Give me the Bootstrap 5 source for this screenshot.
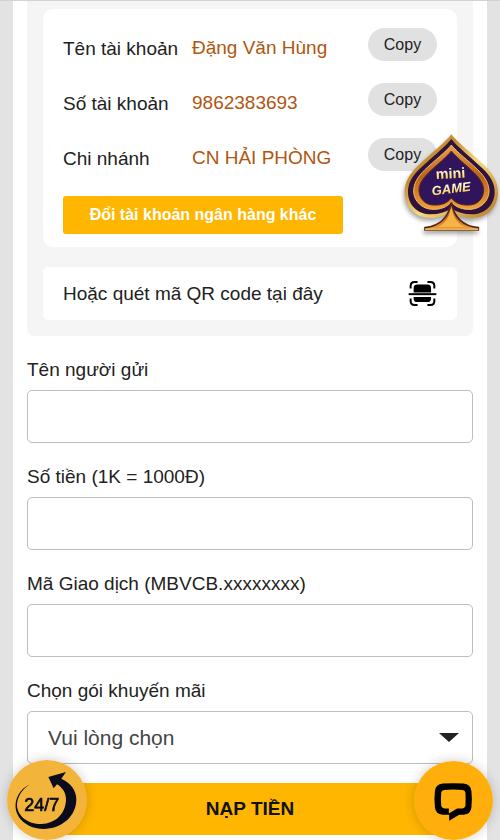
<!DOCTYPE html>
<html lang="vi">
<head>
<meta charset="utf-8">
<meta name="viewport" content="width=device-width, initial-scale=1">
<title>Nạp tiền</title>
<link href="https://cdn.jsdelivr.net/npm/bootstrap@5.3.0/dist/css/bootstrap.min.css" rel="stylesheet">
<style>
body { background: #e3e3e3; border-top: 1px solid #d3d3d3; color: #222; font-family: "Liberation Sans", Arial, sans-serif; font-size: 19px; line-height: 24px; }
.page { margin: 0 13px; padding: 0 14px 5px; }
.bank-panel { background: #f5f5f5; border-radius: 0 0 8px 8px; padding: 8px 16px 16px; margin-bottom: 22px; }
.bank-card { border-radius: 10px; padding: 19px 20px 13px; margin-bottom: 20px; }
.bank-row { margin-bottom: 22px; }
.bank-row:last-of-type { margin-bottom: 25px; }
.bank-label { width: 129px; padding-top: 9px; }
.bank-value { color: #b0560f; padding-top: 8px; }
.btn-copy { width: 69px; height: 33px; padding: 0; border: 0; background: #e1e1e1; color: #222; font-size: 16px; }
.btn-switch { width: 280px; max-width: 100%; height: 38px; padding: 0; border: 0; border-radius: 3px; background: #ffb600; color: #fff; font-size: 16px; font-weight: 700; }
.qr-card { border-radius: 5px; padding: 13px 20px 16px; padding-bottom: 13px; }
.field { margin-bottom: 22px; }
.field:last-of-type { margin-bottom: 19px; }
.field label { display: block; margin-bottom: 8px; }
.field .form-control, .field .form-select { height: 53px; border: 1px solid #bdbdbd; border-radius: 5px; font-size: 19px; }
.field .form-select { padding-left: 20px; color: #444; font-size: 21px; background-image: url("data:image/svg+xml,%3Csvg xmlns='http://www.w3.org/2000/svg' viewBox='0 0 20 9'%3E%3Cpath d='M0 0h20L10 9z' fill='%23222'/%3E%3C/svg%3E"); background-size: 20px 9px; background-position: right 13px center; }
.btn-submit { height: 52px; border: 0; border-radius: 3px; background: #ffb600; color: #111; font-size: 19px; font-weight: 700; }
.float-btn { position: fixed; z-index: 10; display: block; padding: 0; border: 0; background: none; }
.float-btn svg { display: block; }
.float-round { bottom: 0; border-radius: 50%; box-shadow: 0 0 12px rgba(0, 0, 0, .2); }
.float-hotline { left: 7px; }
.float-chat { right: 7px; }
.float-game { top: 133px; right: 0; filter: drop-shadow(-1px 3px 2px rgba(0, 0, 0, .35)); }
</style>
</head>
<body>
<main class="page bg-white">
  <section class="bank-panel">
    <div class="bank-card bg-white">
      <div class="bank-row d-flex align-items-start">
        <div class="bank-label">Tên tài khoản</div>
        <div class="bank-value flex-grow-1">Đặng Văn Hùng</div>
        <button type="button" class="btn btn-copy rounded-pill">Copy</button>
      </div>
      <div class="bank-row d-flex align-items-start">
        <div class="bank-label">Số tài khoản</div>
        <div class="bank-value flex-grow-1">9862383693</div>
        <button type="button" class="btn btn-copy rounded-pill">Copy</button>
      </div>
      <div class="bank-row d-flex align-items-start">
        <div class="bank-label">Chi nhánh</div>
        <div class="bank-value flex-grow-1">CN HẢI PHÒNG</div>
        <button type="button" class="btn btn-copy rounded-pill">Copy</button>
      </div>
      <button type="button" class="btn btn-switch d-block">Đổi tài khoản ngân hàng khác</button>
    </div>
    <div class="qr-card bg-white d-flex align-items-center justify-content-between">
      <span>Hoặc quét mã QR code tại đây</span>
      <button type="button" class="btn p-0 border-0 lh-1" aria-label="Quét mã QR">
        <svg class="d-block" width="29" height="27" viewBox="56 46 86 82" fill="none" stroke="#000" stroke-width="6">
          <path d="M63 72v-8q0-12 12-12h9M114 52h9q12 0 12 12v8M63 102v8q0 12 12 12h9M114 122h9q12 0 12-12v-8"/>
          <path d="M57 89h84"/>
          <path d="M72 84V71q0-11 11-11h31q11 0 11 11v13zM72 98h53v4q0 11-11 11H83q-11 0-11-11z" fill="#000" stroke="none"/>
        </svg>
      </button>
    </div>
  </section>

  <form>
    <div class="field">
      <label for="sender">Tên người gửi</label>
      <input type="text" id="sender" class="form-control">
    </div>
    <div class="field">
      <label for="amount">Số tiền (1K = 1000Đ)</label>
      <input type="text" id="amount" class="form-control">
    </div>
    <div class="field">
      <label for="code">Mã Giao dịch (MBVCB.xxxxxxxx)</label>
      <input type="text" id="code" class="form-control">
    </div>
    <div class="field">
      <label for="promo">Chọn gói khuyến mãi</label>
      <select id="promo" class="form-select"><option>Vui lòng chọn</option></select>
    </div>
    <button type="button" class="btn btn-submit d-block w-100">NẠP TIỀN</button>
  </form>
</main>

<button type="button" class="float-btn float-game" aria-label="Mini game">
  <svg width="96" height="98" viewBox="28 24 288 294">
    <defs>
      <linearGradient id="gold" x1="0" y1="0" x2="1" y2="1">
        <stop offset="0" stop-color="#e8c75a"/><stop offset=".3" stop-color="#c38a2e"/><stop offset=".55" stop-color="#f5dc7c"/><stop offset="1" stop-color="#b97422"/>
      </linearGradient>
      <linearGradient id="copper" x1="0" y1="0" x2="0" y2="1">
        <stop offset="0" stop-color="#e9a24a"/><stop offset=".5" stop-color="#b9621c"/><stop offset="1" stop-color="#f0a23b"/>
      </linearGradient>
      <linearGradient id="shine" x1="0" y1="0" x2="0" y2="1">
        <stop offset=".35" stop-color="#fff6c8"/><stop offset="1" stop-color="#f9c832"/>
      </linearGradient>
    </defs>
    <path d="M170 28C186 50 232 86 270 122C298 149 311 174 310 205C308 249 276 279 232 279C207 279 187 272 170 258C153 272 133 279 108 279C64 279 32 249 30 205C29 174 42 149 70 122C108 86 154 50 170 28Z" fill="url(#gold)"/>
    <path d="M170 42C186 64 226 94 263 130C289 155 301 177 300 204C298 243 269 268 232 268C207 268 187 262 170 250C153 262 133 268 108 268C71 268 42 243 40 204C39 177 51 155 77 130C114 94 154 64 170 42Z" fill="#30123e"/>
    <path d="M170 60C185 80 220 106 249 134C272 156 284 178 283 201C281 230 257 251 229 253C203 254 184 247 170 231C156 247 137 254 111 253C83 251 59 230 57 201C56 178 68 156 91 134C120 106 155 80 170 60Z" fill="url(#copper)" stroke="#efbd64" stroke-width="3"/>
    <path d="M170 78C185 97 213 119 238 143C259 164 268 181 267 198C265 222 249 238 226 240C199 242 182 234 170 219C158 234 141 242 114 240C91 238 75 222 73 198C72 181 81 164 102 143C127 119 155 97 170 78Z" fill="#30155d" stroke="#5d2518" stroke-width="3"/>
    <path d="M170 232C177 272 202 303 251 308V315H91V308C138 303 163 272 170 232Z" fill="url(#copper)" stroke="#54231a" stroke-width="5"/>
    <path d="M170 246C176 278 191 298 211 306H129C149 298 164 278 170 246Z" fill="#f6b447"/>
    <path d="M91 313H251" stroke="#e7b35a" stroke-width="5"/>
    <g text-anchor="middle" font-family="Liberation Sans, Arial, sans-serif" font-weight="700" fill="url(#shine)">
      <text x="168" y="160" font-size="43" transform="rotate(-3 168 160)">mini</text>
      <text x="171" y="204" font-size="39" font-style="italic" transform="rotate(-7 171 204)">GAME</text>
    </g>
  </svg>
</button>

<button type="button" class="float-btn float-round float-hotline" aria-label="Hỗ trợ 24/7">
  <svg width="80" height="80" viewBox="21 45 240 240">
    <circle cx="141" cy="165" r="120" fill="#f3b43c"/>
    <path fill="#0a0c1e" d="M90 118C60 132 44 160 47 190C52 228 90 252 130 252C185 252 229 214 229 163C229 136 212 113 184 101L198 81L145 96L161 130L171 118C188 128 199 145 198 166C196 208 165 236 125 237C85 238 54 215 51 183C50 158 66 132 90 118Z"/>
    <text x="125" y="197" text-anchor="middle" font-family="Liberation Sans, Arial, sans-serif" font-size="54" fill="#0a0c1e" stroke="#0a0c1e" stroke-width="2">24/7</text>
  </svg>
</button>

<button type="button" class="float-btn float-round float-chat" aria-label="Trò chuyện">
  <svg width="79" height="79" viewBox="57 181 238 238">
    <circle cx="176" cy="300" r="119" fill="#ffae0c"/>
    <path fill="#000" fill-rule="evenodd" d="M144 249Q175 247 206 249Q228 251 230 272Q233 297 230 321Q228 341 207 343H193L163 361V343H144Q122 341 120 321Q117 297 120 272Q122 251 144 249ZM148 268Q140 269 139 276Q137 297 139 316Q140 323 148 324H162V339L187 324H203Q211 323 212 316Q213 297 212 276Q211 269 203 268Q175 266 148 268Z"/>
  </svg>
</button>
<script src="https://cdn.jsdelivr.net/npm/bootstrap@5.3.0/dist/js/bootstrap.bundle.min.js"></script>
</body>
</html>
